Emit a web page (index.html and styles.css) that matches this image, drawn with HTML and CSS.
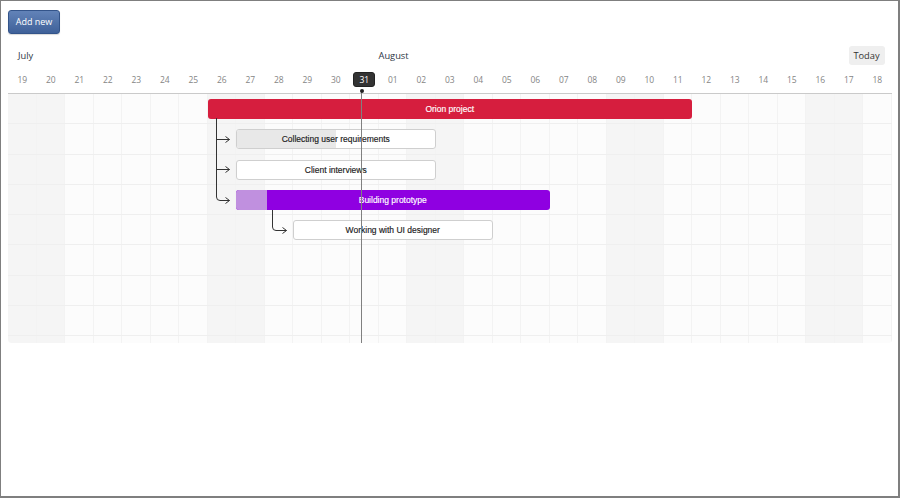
FILE: index.html
```html
<!DOCTYPE html>
<html>
<head>
<meta charset="utf-8">
<link rel="stylesheet" href="styles.css">
</head>
<body>
<div class="frame">
  <div class="toolbar"><button class="btn-add">Add new</button></div>
  <div class="timeline">
    <div class="header">
      <div class="months">
        <div class="month m-july">July</div>
        <div class="month m-aug">August</div>
        <div class="today-btn">Today</div>
      </div>
      <div class="days">
        <div class="day">19</div><div class="day">20</div><div class="day">21</div><div class="day">22</div><div class="day">23</div><div class="day">24</div><div class="day">25</div><div class="day">26</div><div class="day">27</div><div class="day">28</div><div class="day">29</div><div class="day">30</div><div class="day"><span class="cur">31</span></div><div class="day">01</div><div class="day">02</div><div class="day">03</div><div class="day">04</div><div class="day">05</div><div class="day">06</div><div class="day">07</div><div class="day">08</div><div class="day">09</div><div class="day">10</div><div class="day">11</div><div class="day">12</div><div class="day">13</div><div class="day">14</div><div class="day">15</div><div class="day">16</div><div class="day">17</div><div class="day">18</div>
      </div>
    </div>
    <div class="body">
      <div class="col we c1"></div><div class="col we c2"></div><div class="col c3"></div><div class="col c4"></div><div class="col c5"></div><div class="col c6"></div><div class="col c7"></div><div class="col we c8"></div><div class="col we c9"></div><div class="col c10"></div><div class="col c11"></div><div class="col c12"></div><div class="col c13"></div><div class="col c14"></div><div class="col we c15"></div><div class="col we c16"></div><div class="col c17"></div><div class="col c18"></div><div class="col c19"></div><div class="col c20"></div><div class="col c21"></div><div class="col we c22"></div><div class="col we c23"></div><div class="col c24"></div><div class="col c25"></div><div class="col c26"></div><div class="col c27"></div><div class="col c28"></div><div class="col we c29"></div><div class="col we c30"></div><div class="col c31"></div>
      <div class="rowline r1"></div><div class="rowline r2"></div><div class="rowline r3"></div><div class="rowline r4"></div><div class="rowline r5"></div><div class="rowline r6"></div><div class="rowline r7"></div><div class="rowline r8"></div>
      <div class="bar project b-orion"><span class="label">Orion project</span></div>
      <div class="bar task b-collect"><span class="progress" style="width:50%"></span><span class="label">Collecting user requirements</span></div>
      <div class="bar task b-client"><span class="label">Client interviews</span></div>
      <div class="bar proto b-build"><span class="progress" style="width:10%"></span><span class="label">Building prototype</span></div>
      <div class="bar task b-ui"><span class="label">Working with UI designer</span></div>
    </div>
    <svg class="links" width="884" height="160" viewBox="0 0 884 160">
      <path d="M208.5 24 V103 Q208.5 106.5 212 106.5 H221.5" />
      <path d="M208.5 45.5 H221.5" />
      <path d="M208.5 75.5 H221.5" />
      <path d="M217.5 42.5 L221.5 45.5 L217.5 48.5" />
      <path d="M217.5 72.5 L221.5 75.5 L217.5 78.5" />
      <path d="M217.5 103.5 L221.5 106.5 L217.5 109.5" />
      <path d="M264.5 116 V133 Q264.5 136.5 268 136.5 H278.5" />
      <path d="M274.5 133.5 L278.5 136.5 L274.5 139.5" />
    </svg>
    <div class="now-line"></div>
    <div class="now-dot"></div>
  </div>
</div>
</body>
</html>
```

FILE: styles.css
```css
html, body {
  margin: 0;
  padding: 0;
  background: #fff;
}
.frame {
  width: 900px;
  height: 498px;
  box-sizing: border-box;
  border: 1px solid #7f7f7f;
  border-right-width: 2px;
  border-bottom-width: 2px;
  padding: 9px 0 0 7px;
  font-family: "Open Sans", "DejaVu Sans", sans-serif;
}
.toolbar {
  height: 24px;
  display: flex;
}
.btn-add {
  width: 52px;
  height: 24px;
  box-sizing: border-box;
  padding: 0;
  border: 1px solid #33548a;
  border-radius: 3px;
  background: linear-gradient(#6283b8, #3f6199);
  color: #fff;
  font-family: "Open Sans", "DejaVu Sans", sans-serif;
  font-size: 9px;
  line-height: 22px;
  box-shadow: 0 1px 1px rgba(0,0,0,0.15);
}
.timeline {
  position: relative;
  width: 884px;
  margin-top: 12px;
}
.header {
  border-bottom: 1px solid #cacaca;
  padding-bottom: 6px;
}
.months {
  display: grid;
  grid-template-columns: repeat(31, 28.5px);
  height: 19px;
  align-items: center;
}
.month {
  font-size: 9.3px;
  color: #2c3644;
  white-space: nowrap;
}
.m-july { grid-column: 1 / 5; padding-left: 10px; }
.m-aug { grid-column: 14 / 18; }
.today-btn {
  grid-column: 29 / 32;
  justify-self: end;
  margin-right: 7px;
  width: 36px;
  height: 19px;
  box-sizing: border-box;
  background: #efefef;
  border-radius: 3px;
  font-size: 9.3px;
  line-height: 19px;
  text-align: center;
  color: #333;
}
.days {
  display: grid;
  grid-template-columns: repeat(31, 28.5px);
  margin-top: 7px;
  height: 15px;
  align-items: center;
}
.day {
  text-align: center;
  font-size: 8.5px;
  color: #858585;
  line-height: 15px;
}
.cur {
  display: inline-block;
  width: 22px;
  height: 15px;
  background: #333;
  border: 1px solid #222;
  box-sizing: border-box;
  border-radius: 3px;
  color: #fff;
  line-height: 13px;
}
.body {
  display: grid;
  grid-template-columns: repeat(31, 28.5px);
  grid-template-rows: repeat(8, 30.25px) 7px;
  background: #fcfcfc;
  border-radius: 0 0 4px 4px;
  overflow: hidden;
}
.col {
  grid-row: 1 / -1;
  border-right: 1px solid #f3f3f3;
}
.col.we { background: #f5f5f5; }
.c1{grid-column:1}.c2{grid-column:2}.c3{grid-column:3}.c4{grid-column:4}.c5{grid-column:5}.c6{grid-column:6}.c7{grid-column:7}.c8{grid-column:8}.c9{grid-column:9}.c10{grid-column:10}.c11{grid-column:11}.c12{grid-column:12}.c13{grid-column:13}.c14{grid-column:14}.c15{grid-column:15}.c16{grid-column:16}.c17{grid-column:17}.c18{grid-column:18}.c19{grid-column:19}.c20{grid-column:20}.c21{grid-column:21}.c22{grid-column:22}.c23{grid-column:23}.c24{grid-column:24}.c25{grid-column:25}.c26{grid-column:26}.c27{grid-column:27}.c28{grid-column:28}.c29{grid-column:29}.c30{grid-column:30}.c31{grid-column:31}
.rowline {
  grid-column: 1 / -1;
  border-bottom: 1px solid #efefef;
}
.r1{grid-row:1}.r2{grid-row:2}.r3{grid-row:3}.r4{grid-row:4}.r5{grid-row:5}.r6{grid-row:6}.r7{grid-row:7}.r8{grid-row:8}
.bar {
  align-self: center;
  height: 20px;
  box-sizing: border-box;
  border-radius: 3px;
  display: grid;
  overflow: hidden;
  font-family: "Liberation Sans", Arial, sans-serif;
  font-size: 8.5px;
}
.bar > * { grid-area: 1 / 1; }
.label {
  align-self: center;
  justify-self: center;
  white-space: nowrap;
  -webkit-text-stroke: 0.15px currentColor;
}
.progress {
  height: 100%;
}
.project {
  background: #d61e3e;
  color: #fff;
  margin-top: -1px;
}
.task {
  background: #fff;
  border: 1px solid #cfcfcf;
  color: #1a1a1a;
}
.task .progress { background: #e8e8e8; }
.proto {
  background: #8f00e1;
  color: #fff;
}
.proto .progress { background: #c090df; }
.b-orion { grid-row: 1; grid-column: 8 / 25; }
.b-collect { grid-row: 2; grid-column: 9 / 16; }
.b-client { grid-row: 3; grid-column: 9 / 16; }
.b-build { grid-row: 4; grid-column: 9 / 20; }
.b-ui { grid-row: 5; grid-column: 11 / 18; }
.links {
  position: absolute;
  left: 0;
  top: 48px;
  fill: none;
  stroke: #333;
  stroke-width: 1;
}
.now-line {
  position: absolute;
  left: 353px;
  top: 45px;
  width: 1px;
  height: 252px;
  background: #808080;
}
.now-dot {
  position: absolute;
  left: 351.5px;
  top: 43px;
  width: 4px;
  height: 4px;
  border-radius: 50%;
  background: #222;
}
```
